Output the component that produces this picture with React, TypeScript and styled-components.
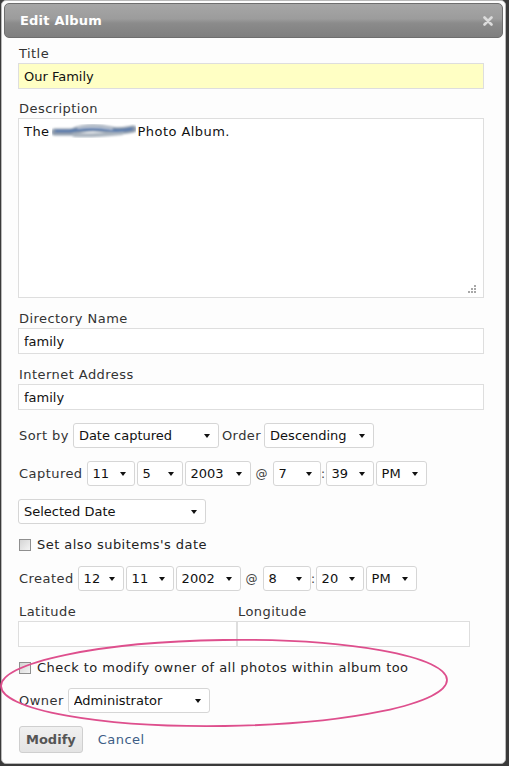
import styled, { createGlobalStyle } from "styled-components";

const GlobalStyle = createGlobalStyle`
  html, body {
    margin: 0;
    padding: 0;
    background: #3a3a3a;
  }
  * {
    box-sizing: border-box;
  }
`;

const Page = styled.div`
  position: relative;
  width: 509px;
  height: 766px;
  padding-left: 1px;
  background: #3a3a3a;
  font-family: "DejaVu Sans", Verdana, sans-serif;
  font-size: 13px;
  letter-spacing: 0.45px;
  color: #333;
`;

const Dialog = styled.div`
  width: 505px;
  height: 764px;
  background: #fdfdfd;
  border: 1px solid #b9b9b9;
  border-radius: 5px;
  padding: 2px;
`;

const TitleBar = styled.div`
  height: 35px;
  display: flex;
  align-items: center;
  justify-content: space-between;
  padding: 0 9px 0 15px;
  border: 1px solid #6e6e6e;
  border-radius: 5px;
  background: linear-gradient(
    #a6a6a6 0%,
    #9c9c9c 45%,
    #8b8b8b 58%,
    #7f7f7f 100%
  );
`;

const TitleText = styled.span`
  color: #fff;
  font-weight: bold;
  font-size: 13px;
  letter-spacing: 0.2px;
`;

const Close = styled.button`
  border: none;
  background: none;
  padding: 0;
  display: flex;
  cursor: pointer;
`;

const Content = styled.div`
  padding: 7px 0 0 14px;
  display: flex;
  flex-direction: column;
`;

const Field = styled.div<{ $mb?: number }>`
  display: flex;
  flex-direction: column;
  margin-bottom: ${(p) => p.$mb ?? 11}px;
`;

const Label = styled.label`
  display: block;
  line-height: 17px;
  margin: 0 0 1px 1px;
  color: #333;
`;

const TextInput = styled.input<{ $w?: number; $yellow?: boolean }>`
  width: ${(p) => p.$w ?? 466}px;
  height: 26px;
  border: 1px solid #dedede;
  background: ${(p) => (p.$yellow ? "#ffffc4" : "#fff")};
  font: inherit;
  color: #111;
  padding: 0 5px;
  outline: none;
`;

const AreaWrap = styled.div`
  position: relative;
  width: 466px;
  height: 180px;
`;

const TextArea = styled.div`
  width: 100%;
  height: 100%;
  border: 1px solid #dedede;
  background: #fff;
  color: #111;
  padding: 4px 5px;
  line-height: 18px;
`;

const Grip = styled.svg`
  position: absolute;
  right: 8px;
  bottom: 5px;
`;

const Row = styled.div<{ $mb?: number }>`
  display: flex;
  align-items: center;
  height: 25px;
  margin-bottom: ${(p) => p.$mb ?? 13}px;
`;

const RowLabel = styled.span<{ $mr?: number; $ml?: number }>`
  margin-left: ${(p) => p.$ml ?? 1}px;
  margin-right: ${(p) => p.$mr ?? 4}px;
  color: #333;
`;

const Sep = styled.span<{ $w: number }>`
  width: ${(p) => p.$w}px;
  text-align: center;
  color: #444;
  font-size: 12px;
  letter-spacing: 0;
`;

const SelectWrap = styled.div<{ $w: number; $mr?: number }>`
  position: relative;
  width: ${(p) => p.$w}px;
  height: 25px;
  margin-right: ${(p) => p.$mr ?? 2}px;
  &::after {
    content: "";
    position: absolute;
    right: 9px;
    top: 11px;
    border-left: 3.5px solid transparent;
    border-right: 3.5px solid transparent;
    border-top: 4px solid #111;
    pointer-events: none;
  }
`;

const Select = styled.select`
  appearance: none;
  width: 100%;
  height: 100%;
  border: 1px solid #d6d6d6;
  border-radius: 3px;
  background: #fff;
  font: inherit;
  color: #111;
  padding: 0 0 0 5px;
  outline: none;
`;

const CheckRow = styled.label<{ $mb?: number }>`
  display: flex;
  align-items: center;
  margin-bottom: ${(p) => p.$mb ?? 13}px;
  line-height: 16px;
  color: #222;
`;

const Check = styled.input`
  appearance: none;
  width: 12px;
  height: 12px;
  margin: 0 6px 0 1px;
  border: 1px solid #8f8f8f;
  background: linear-gradient(135deg, #d4d4d4, #f4f4f4);
`;

const GeoRow = styled.div`
  display: flex;
  margin-bottom: 13px;
`;

const Actions = styled.div`
  display: flex;
  align-items: center;
  gap: 15px;
`;

const Button = styled.button`
  height: 27px;
  padding: 0 6px;
  margin-left: 1px;
  border: 1px solid #cfcfcf;
  border-radius: 3px;
  background: linear-gradient(#f0f0f0, #e4e4e4);
  font: inherit;
  font-size: 13px;
  font-weight: bold;
  letter-spacing: 0;
  color: #555;
`;

const LinkBtn = styled.a`
  color: #3d5d86;
  text-decoration: none;
`;

const Annotation = styled.svg`
  position: absolute;
  left: 0;
  top: 630px;
  pointer-events: none;
`;

function Smudge() {
  return (
    <svg width="84" height="14" viewBox="0 0 84 14" style={{ verticalAlign: "-2px", margin: "0 2px" }}>
      <defs>
        <filter id="blur" x="-10%" y="-50%" width="120%" height="200%">
          <feGaussianBlur stdDeviation="0.9" />
        </filter>
      </defs>
      <g filter="url(#blur)" fill="none" strokeLinecap="round">
        <path d="M3 8 L20 8 C32 3 44 3 58 6 C68 8 74 6 81 5" stroke="#8c9aab" strokeWidth="7" />
        <path d="M22 11 C36 12 50 11 70 9" stroke="#a9b3be" strokeWidth="4" />
        <path d="M4 7 L18 7 C30 5 42 4 56 6 C66 8 72 6 80 5" stroke="#3f6fae" strokeWidth="2.2" />
        <path d="M26 4 C40 2 50 3 60 5" stroke="#d7dde4" strokeWidth="1.6" />
      </g>
    </svg>
  );
}

interface SelProps {
  w: number;
  value: string;
  mr?: number;
}

function Sel({ w, value, mr }: SelProps) {
  return (
    <SelectWrap $w={w} $mr={mr}>
      <Select defaultValue={value}>
        <option>{value}</option>
      </Select>
    </SelectWrap>
  );
}

export default function App() {
  return (
    <>
      <GlobalStyle />
      <Page>
        <Dialog>
          <TitleBar>
            <TitleText>Edit Album</TitleText>
            <Close type="button">
              <svg width="10" height="10" viewBox="0 0 10 10">
                <path d="M1.5 1.5 L8.5 8.5 M8.5 1.5 L1.5 8.5" stroke="#dcdcdc" strokeWidth="2.6" strokeLinecap="round" />
              </svg>
            </Close>
          </TitleBar>
          <Content>
            <Field>
              <Label>Title</Label>
              <TextInput $yellow defaultValue="Our Family" />
            </Field>
            <Field $mb={12}>
              <Label>Description</Label>
              <AreaWrap>
                <TextArea>
                  The
                  <Smudge />
                  Photo Album.
                </TextArea>
                <Grip width="8" height="8" viewBox="0 0 8 8">
                  <g fill="#a8a8a8">
                    <rect x="6" y="0" width="2" height="2" />
                    <rect x="3" y="3" width="2" height="2" />
                    <rect x="6" y="3" width="2" height="2" />
                    <rect x="0" y="6" width="2" height="2" />
                    <rect x="3" y="6" width="2" height="2" />
                    <rect x="6" y="6" width="2" height="2" />
                  </g>
                </Grip>
              </AreaWrap>
            </Field>
            <Field $mb={12}>
              <Label>Directory Name</Label>
              <TextInput defaultValue="family" />
            </Field>
            <Field $mb={13}>
              <Label>Internet Address</Label>
              <TextInput defaultValue="family" />
            </Field>

            <Row>
              <RowLabel>Sort by</RowLabel>
              <Sel w={146} value="Date captured" mr={3} />
              <RowLabel $ml={0} $mr={3}>Order</RowLabel>
              <Sel w={110} value="Descending" />
            </Row>

            <Row>
              <RowLabel>Captured</RowLabel>
              <Sel w={48} value="11" />
              <Sel w={46} value="5" />
              <Sel w={66} value="2003" mr={0} />
              <Sep $w={22}>@</Sep>
              <Sel w={48} value="7" mr={0} />
              <Sep $w={5}>:</Sep>
              <Sel w={48} value="39" />
              <Sel w={51} value="PM" />
            </Row>

            <Row>
              <Sel w={188} value="Selected Date" />
            </Row>

            <CheckRow>
              <Check type="checkbox" />
              Set also subitems's date
            </CheckRow>

            <Row $mb={12}>
              <RowLabel>Created</RowLabel>
              <Sel w={46} value="12" />
              <Sel w={48} value="11" />
              <Sel w={65} value="2002" mr={0} />
              <Sep $w={22}>@</Sep>
              <Sel w={48} value="8" mr={0} />
              <Sep $w={5}>:</Sep>
              <Sel w={48} value="20" />
              <Sel w={51} value="PM" />
            </Row>

            <GeoRow>
              <Field $mb={0}>
                <Label>Latitude</Label>
                <TextInput $w={219} />
              </Field>
              <Field $mb={0}>
                <Label>Longitude</Label>
                <TextInput $w={233} />
              </Field>
            </GeoRow>

            <CheckRow $mb={12}>
              <Check type="checkbox" />
              Check to modify owner of all photos within album too
            </CheckRow>

            <Row>
              <RowLabel $mr={4}>Owner</RowLabel>
              <Sel w={142} value="Administrator" />
            </Row>

            <Actions>
              <Button type="button">Modify</Button>
              <LinkBtn href="#">Cancel</LinkBtn>
            </Actions>
          </Content>
        </Dialog>
        <Annotation width="460" height="110" viewBox="0 630 460 110">
          <ellipse
            cx="224"
            cy="683"
            rx="223"
            ry="43"
            fill="none"
            stroke="#de4f8d"
            strokeWidth="1.8"
            transform="rotate(-0.8 224 683)"
          />
        </Annotation>
      </Page>
    </>
  );
}
